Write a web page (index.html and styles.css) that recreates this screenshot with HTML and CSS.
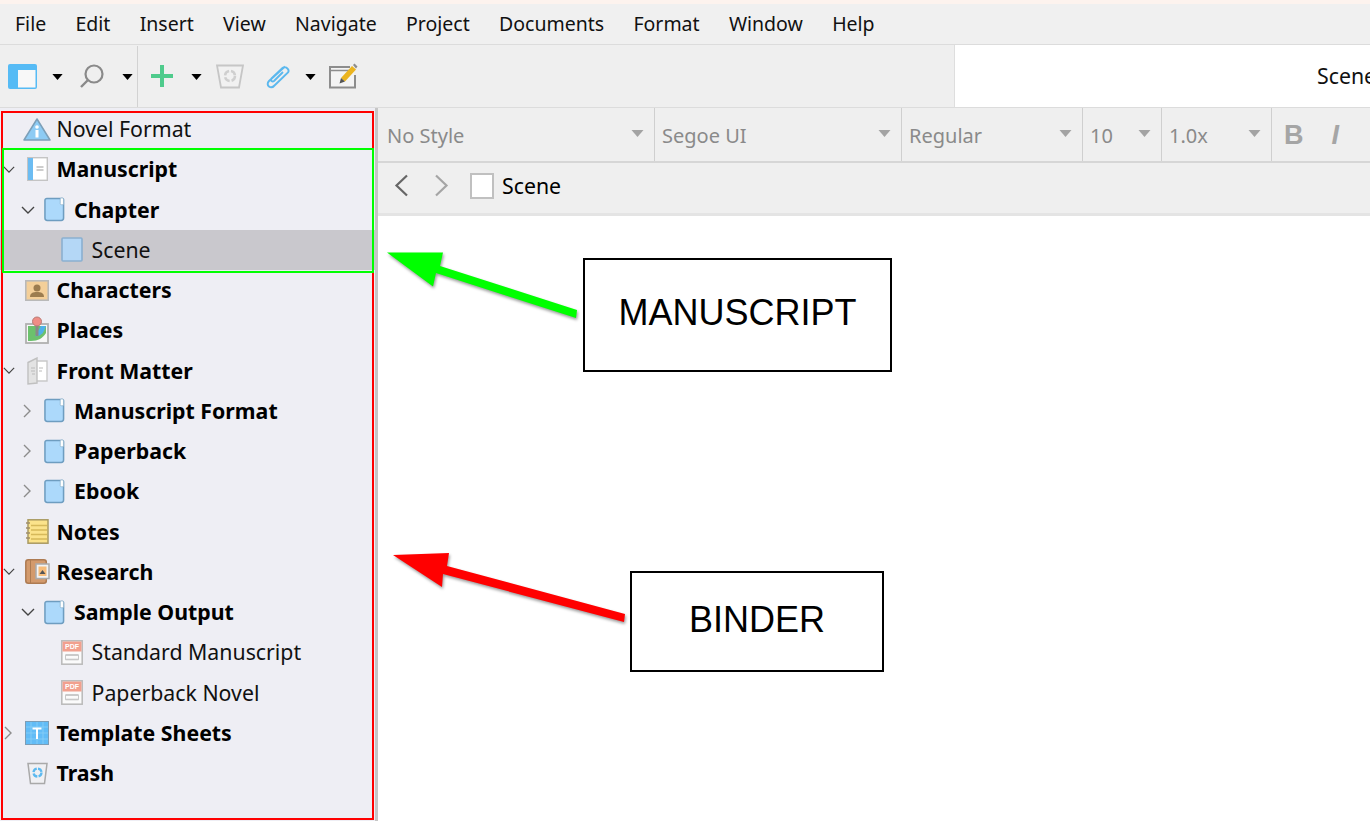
FILE: index.html
```html
<!DOCTYPE html>
<html lang="en">
<head>
<meta charset="utf-8">
<title>Scrivener binder</title>
<link rel="stylesheet" href="styles.css">
</head>
<body>
<svg class="defs" width="0" height="0" aria-hidden="true">
  <symbol id="folder" viewBox="0 0 22 26"><path d="M3 1.500h16.500a1 1 0 0 1 1 1V22a2.500 2.500 0 0 1-2.500 2.500H3.500A2.500 2.500 0 0 1 1 22V3.500a2 2 0 0 1 2-2z" fill="#acd9fb" stroke="#6e9dc0" stroke-width="1.600"/><rect x="17" y="1" width="3.400" height="7" rx="1" fill="#fff" stroke="#8fb3cc" stroke-width=".8"/></symbol>
  <symbol id="scene" viewBox="0 0 22 25"><rect x="1" y="1" width="20" height="23" rx="1" fill="#b4d7f6" stroke="#8bb0d0" stroke-width="1.600"/></symbol>
  <symbol id="pdf" viewBox="0 0 22 25"><rect x=".8" y=".8" width="20.400" height="23.400" fill="#fbfbfb" stroke="#b9b9b9" stroke-width="1.500"/><rect x="1.500" y="1.500" width="19" height="10" fill="#f2a08e"/><path d="M4.500 15h13M4.500 19.500h13" stroke="#bdbdbd" stroke-width="1.500"/><path d="M4.500 15h13v4.500h-13z" fill="none" stroke="#c8c8c8"/></symbol>
  <symbol id="caret" viewBox="0 0 12 7"><path d="M0 0h12L6 7z"/></symbol>
  <symbol id="down" viewBox="0 0 14 8"><path d="M1 1l6 6 6-6" fill="none" stroke="currentColor" stroke-width="1.400"/></symbol>
  <symbol id="right" viewBox="0 0 8 14"><path d="M1 1l6 6-6 6" fill="none" stroke="currentColor" stroke-width="1.400"/></symbol>
</svg>

<header class="menubar">
  <span>File</span><span>Edit</span><span>Insert</span><span>View</span><span>Navigate</span><span>Project</span><span>Documents</span><span>Format</span><span>Window</span><span>Help</span>
</header>

<div class="toolbar">
  <div class="tools">
    <svg class="t-layout" width="29" height="25" viewBox="0 0 29 25"><rect x="0" y="0" width="29" height="25" rx="2" fill="#56bbf5"/><rect x="10" y="6" width="17.500" height="17.500" fill="#f8f8f8"/></svg>
    <svg class="caret t-c1" width="11" height="6"><use href="#caret"/></svg>
    <svg class="t-search" width="24" height="24" viewBox="0 0 24 24"><circle cx="14" cy="10" r="8.500" fill="none" stroke="#8a8a8a" stroke-width="2.200"/><path d="M8 16l-7 7" stroke="#8a8a8a" stroke-width="2.400"/></svg>
    <svg class="caret t-c2" width="11" height="6"><use href="#caret"/></svg>
    <div class="t-sep"></div>
    <svg class="t-plus" width="22" height="22" viewBox="0 0 22 22"><path d="M11 0v22M0 11h22" stroke="#4fcb8c" stroke-width="4"/></svg>
    <svg class="caret t-c3" width="11" height="6"><use href="#caret"/></svg>
    <svg class="t-trash" width="28" height="25" viewBox="0 0 28 25"><path d="M1 1.500h26l-4 22H5z" fill="#f1f1f1" stroke="#c6c6c6" stroke-width="1.800"/><circle cx="14" cy="12" r="5" fill="none" stroke="#cfcfcf" stroke-width="2.500" stroke-dasharray="6 2"/></svg>
    <svg class="t-clip" width="25" height="26" viewBox="0 0 25 26"><path d="M20 3.500 4 18c-4 4.500 2 8.500 5.500 4.500L23 9.500c2-3-2.500-7-5.500-4.500L6.500 15.500c-1.500 2 .8 3.800 2.500 2.500l9-9" fill="none" stroke="#5bb8ee" stroke-width="1.900"/></svg>
    <svg class="caret t-c4" width="11" height="6"><use href="#caret"/></svg>
    <svg class="t-note" width="30" height="26" viewBox="0 0 30 26"><path d="M26 12v12.500H1V4h20" fill="#f4f4f4" stroke="#8d8d8d" stroke-width="2"/><path d="M1 7.500h19" stroke="#8d8d8d" stroke-width="1.500"/><path d="M12 15 23 3l4 3.500L16 18.500z" fill="#ebb41f"/><path d="M12 15l4 3.500-5.500 2z" fill="#555"/><path d="M24 2l1.500-1.500 3 3L27 5.500z" fill="#8d8d8d"/></svg>
  </div>
  <div class="doc-title">Scene</div>
</div>

<main class="workspace">
  <nav class="binder">
    <div class="row lv0"><i class="chev"></i><span class="ico"><svg width="28" height="23" viewBox="0 0 28 23"><path d="M14 1 27 22H1z" fill="#8dcbf4" stroke="#7c9fb8" stroke-width="1.500" stroke-linejoin="round"/><circle cx="14" cy="9" r="1.800" fill="#fff"/><rect x="12.500" y="12" width="3" height="7.500" fill="#fff"/></svg></span><span class="label">Novel Format</span></div>
    <div class="row lv0 b"><i class="chev"><svg class="down" width="12" height="7"><use href="#down"/></svg></i><span class="ico"><svg width="21" height="24" viewBox="0 0 21 24"><rect x=".7" y=".7" width="19.600" height="22.600" fill="#fff" stroke="#c4c4c4" stroke-width="1.400"/><rect x="1" y="1" width="5" height="22" fill="#6cbcf2"/><path d="M9.500 10h7M9.500 13h7" stroke="#bdbdbd" stroke-width="1.300"/></svg></span><span class="label">Manuscript</span></div>
    <div class="row lv1 b"><i class="chev"><svg class="down" width="14" height="8"><use href="#down"/></svg></i><span class="ico"><svg width="21" height="25"><use href="#folder"/></svg></span><span class="label">Chapter</span></div>
    <div class="row lv2 sel"><i class="chev"></i><span class="ico"><svg width="22" height="25"><use href="#scene"/></svg></span><span class="label">Scene</span></div>
    <div class="row lv0 b"><i class="chev"></i><span class="ico"><svg width="24" height="21" viewBox="0 0 24 21"><rect x=".8" y=".8" width="22.400" height="19.400" fill="#f4cf99" stroke="#b9b9b9" stroke-width="1.600"/><circle cx="12" cy="8" r="3.500" fill="#9c7c4f"/><path d="M5 17c0-4 3-5 7-5s7 1 7 5z" fill="#9c7c4f"/></svg></span><span class="label">Characters</span></div>
    <div class="row lv0 b"><i class="chev"></i><span class="ico"><svg width="24" height="28" viewBox="0 0 24 28"><rect x="1" y="8" width="22" height="19" fill="#f7f7f7" stroke="#b0b0b0" stroke-width="1.800"/><path d="M3 10h18v7c-3 5-8 8-15 8H3z" fill="#6cc16d"/><path d="M10 20c3 1 7-1 9-5l2-5h-5z" fill="#4fb1ea"/><path d="M12 9v11" stroke="#888" stroke-width="3"/><circle cx="12" cy="5.500" r="4.500" fill="#ef8d86" stroke="#b87a74"/></svg></span><span class="label">Places</span></div>
    <div class="row lv0 b"><i class="chev"><svg class="down" width="12" height="7"><use href="#down"/></svg></i><span class="ico"><svg width="21" height="28" viewBox="0 0 21 28"><path d="M9 4h11v20H9z" fill="#fff" stroke="#c9c9c9" stroke-width="1.400"/><path d="M1 5.500 10 1v25l-9 1z" fill="#e3e3e3" stroke="#c0c0c0" stroke-width="1.400"/><path d="M4 11h4M4 14h4M5 17h3M12 11h4M12 14h3" stroke="#bbb" stroke-width="1.100"/></svg></span><span class="label">Front Matter</span></div>
    <div class="row lv1 b"><i class="chev"><svg class="rt" width="8" height="14"><use href="#right"/></svg></i><span class="ico"><svg width="21" height="25"><use href="#folder"/></svg></span><span class="label">Manuscript Format</span></div>
    <div class="row lv1 b"><i class="chev"><svg class="rt" width="8" height="14"><use href="#right"/></svg></i><span class="ico"><svg width="21" height="25"><use href="#folder"/></svg></span><span class="label">Paperback</span></div>
    <div class="row lv1 b"><i class="chev"><svg class="rt" width="8" height="14"><use href="#right"/></svg></i><span class="ico"><svg width="21" height="25"><use href="#folder"/></svg></span><span class="label">Ebook</span></div>
    <div class="row lv0 b"><i class="chev"></i><span class="ico"><svg width="23" height="25" viewBox="0 0 23 25"><rect x="2" y=".8" width="20" height="23.400" fill="#fbe38b" stroke="#a99a62" stroke-width="1.500"/><path d="M5 6.500h16M5 11h16M5 15.500h16M5 20h16" stroke="#d6b95a" stroke-width="1.300"/><path d="M0 4h4M0 9h4M0 14h4M0 19h4" stroke="#a08f6a" stroke-width="1.600"/></svg></span><span class="label">Notes</span></div>
    <div class="row lv0 b"><i class="chev"><svg class="down" width="12" height="7"><use href="#down"/></svg></i><span class="ico"><svg width="25" height="25" viewBox="0 0 25 25"><rect x=".8" y=".8" width="20.500" height="23.400" rx="2.500" fill="#d39a6c" stroke="#ad7b52" stroke-width="1.500"/><path d="M5.500 1v23" stroke="#ad7b52"/><rect x="11" y="5" width="13" height="14.500" fill="#f3f3f3" stroke="#aaa" stroke-width="1.500"/><rect x="13.500" y="7.500" width="8" height="9.500" fill="#f7bd7b"/><path d="M14.500 15l3-4 3 4z" fill="#555"/></svg></span><span class="label">Research</span></div>
    <div class="row lv1 b"><i class="chev"><svg class="down" width="14" height="8"><use href="#down"/></svg></i><span class="ico"><svg width="21" height="25"><use href="#folder"/></svg></span><span class="label">Sample Output</span></div>
    <div class="row lv2"><i class="chev"></i><span class="ico"><svg width="22" height="25" viewBox="0 0 22 25"><use href="#pdf" width="22" height="25"/><text x="11" y="9.200" text-anchor="middle" class="pdf-label">PDF</text></svg></span><span class="label">Standard Manuscript</span></div>
    <div class="row lv2"><i class="chev"></i><span class="ico"><svg width="22" height="25" viewBox="0 0 22 25"><use href="#pdf" width="22" height="25"/><text x="11" y="9.200" text-anchor="middle" class="pdf-label">PDF</text></svg></span><span class="label">Paperback Novel</span></div>
    <div class="row lv0 b"><i class="chev"><svg class="rt tmpl" width="8" height="14"><use href="#right"/></svg></i><span class="ico"><svg width="24" height="24" viewBox="0 0 24 24"><rect x=".5" y=".5" width="23" height="23" fill="#62bcf6" stroke="#7d9db5"/><path d="M6 1v22M12 1v22M18 1v22M1 6h22M1 12h22M1 18h22" stroke="#8ccff8" stroke-width=".8"/><path d="M7.500 6.500h9v2h-3.500V18h-2V8.500H7.500z" fill="#fff"/></svg></span><span class="label">Template Sheets</span></div>
    <div class="row lv0 b"><i class="chev"></i><span class="ico"><svg width="21" height="23" viewBox="0 0 21 23"><path d="M1 1.500h19l-2.500 20h-14z" fill="#f0f0f3" stroke="#a9a9a9" stroke-width="1.500"/><circle cx="10.500" cy="10.500" r="4" fill="none" stroke="#5cb9f0" stroke-width="2.300" stroke-dasharray="5 1.300"/></svg></span><span class="label">Trash</span></div>
  </nav>

  <section class="editor">
    <div class="formatbar">
      <div class="fmt w-style"><span>No Style</span><svg class="caret" width="13" height="7"><use href="#caret"/></svg></div>
      <div class="fmt w-font"><span>Segoe UI</span><svg class="caret" width="13" height="7"><use href="#caret"/></svg></div>
      <div class="fmt w-weight"><span>Regular</span><svg class="caret" width="13" height="7"><use href="#caret"/></svg></div>
      <div class="fmt w-size"><span>10</span><svg class="caret" width="13" height="7"><use href="#caret"/></svg></div>
      <div class="fmt w-spacing"><span>1.0x</span><svg class="caret" width="13" height="7"><use href="#caret"/></svg></div>
      <div class="fmt-btns"><b>B</b><em>I</em></div>
    </div>
    <div class="navbar">
      <svg class="nav-back" width="15" height="23" viewBox="0 0 15 23"><path d="M13 1.500 2.500 11.500 13 21.500" fill="none" stroke="#666" stroke-width="2.200"/></svg>
      <svg class="nav-fwd" width="15" height="23" viewBox="0 0 15 23"><path d="M2 1.500 12.500 11.500 2 21.500" fill="none" stroke="#a5a5a5" stroke-width="2.200"/></svg>
      <span class="nav-doc"></span>
      <span class="nav-title">Scene</span>
    </div>
    <div class="page"></div>
  </section>
</main>

<div class="mark mark-red"></div>
<div class="mark mark-green"></div>
<svg class="arrows" width="1370" height="821" viewBox="0 0 1370 821" aria-hidden="true">
  <polygon class="arrow" fill="#00ff00" points="387,252.500 443,252.500 440,266 577,310 576,318 436,273 433,286.500"/>
  <polygon class="arrow" fill="#ff0000" points="393,555 449,553 447,566 625,614 624,622 443,574 442,587"/>
</svg>
<div class="callout callout-ms">MANUSCRIPT</div>
<div class="callout callout-bd">BINDER</div>
</body>
</html>
```
FILE: styles.css
```css
html, body { margin: 0; height: 821px; overflow: hidden; }
body {
  position: relative;
  display: flex;
  flex-direction: column;
  width: 1370px;
  background: #fff;
  font-family: "Noto Sans", "Open Sans", sans-serif;
  font-size: 20px;
  color: #111;
}
.defs { position: absolute; }
.pdf-label { font: bold 7px "Liberation Sans", sans-serif; fill: #fff; }

.menubar {
  box-sizing: border-box;
  height: 45px;
  flex: none;
  display: flex;
  align-items: center;
  gap: 29.300px;
  padding: 0 0 2px 15px;
  font-size: 19.500px;
  background: #f0f0f0;
  border-top: 4px solid #fdf3ee;
  border-bottom: 1px solid #dcdcdc;
}

.toolbar {
  height: 63px;
  flex: none;
  display: flex;
}
.tools {
  width: 955px;
  flex: none;
  display: flex;
  align-items: center;
  box-sizing: border-box;
  padding-left: 8px;
  background: #efefef;
  border-right: 1px solid #dedede;
  border-bottom: 1px solid #dcdcdc;
}
.caret { fill: #000; flex: none; }
.t-c1 { margin: 2px 0 0 15px; }
.t-search { margin-left: 17px; }
.t-c2 { margin: 2px 0 0 18px; }
.t-sep { width: 1px; height: 61px; background: #d2d2d2; margin-left: 4px; }
.t-plus { margin-left: 13px; }
.t-c3 { margin: 2px 0 0 18px; }
.t-trash { margin-left: 14px; }
.t-clip { margin-left: 21px; }
.t-c4 { margin: 2px 0 0 15px; }
.t-note { margin-left: 13px; }
.doc-title {
  flex: 1;
  min-width: 0;
  overflow: hidden;
  white-space: nowrap;
  box-sizing: border-box;
  padding: 16px 0 0 362px;
  font-size: 21.300px;
  background: #fff;
  border-bottom: 1px solid #dcdcdc;
}

.workspace { flex: 1; display: flex; min-height: 0; }
.binder {
  width: 378px;
  flex: none;
  box-sizing: border-box;
  padding-top: 1px;
  font-size: 21.300px;
  background: #eeeef4;
  border-right: 3px solid #c6c6c6;
}
.row {
  height: 40.250px;
  display: flex;
  align-items: center;
  white-space: nowrap;
}
.lv0 { padding-left: 3px; }
.lv1 { padding-left: 20.500px; }
.lv2 { padding-left: 38px; }
.chev {
  width: 22px;
  flex: none;
  display: flex;
  align-items: center;
  color: #444;
}
.chev .rt { margin-left: 2px; color: #8c8c8c; }
.chev .rt.tmpl { margin-left: 1px; }
.ico { width: 24px; flex: none; display: flex; justify-content: center; align-items: center; }
.ico svg { flex: none; display: block; }
.label { margin: 0 0 1px 7.500px; }
.b .label { font-weight: 700; color: #000; }
.sel { background: #c9c8cd; }

.editor { flex: 1; min-width: 0; display: flex; flex-direction: column; }
.formatbar {
  height: 55px;
  flex: none;
  display: flex;
  box-sizing: border-box;
  background: #efefef;
  border-bottom: 2px solid #d6d6d6;
  color: #8a8a8a;
}
.fmt {
  box-sizing: border-box;
  display: flex;
  align-items: center;
  justify-content: space-between;
  padding: 2px 10px 0 7px;
  border-right: 1px solid #cfcfcf;
  flex: none;
}
.fmt .caret { fill: #a3a3a3; margin-top: -4px; }
.w-style { width: 277px; padding-left: 9px; }
.w-font { width: 247px; }
.w-weight { width: 181px; }
.w-size { width: 79px; }
.w-spacing { width: 110px; }
.fmt-btns { display: flex; align-items: center; padding: 2px 0 0 12px; gap: 28px; font-size: 27px; color: #a5a5a5; }
.fmt-btns b { font-family: "Liberation Sans", sans-serif; }
.fmt-btns em { font-family: "Liberation Sans", sans-serif; font-weight: 700; }

.navbar {
  height: 53px;
  flex: none;
  box-sizing: border-box;
  display: flex;
  align-items: center;
  padding: 0 0 5px 16px;
  font-size: 21.300px;
  background: #efefef;
  border-bottom: 3px solid #e4e4e4;
}
.nav-fwd { margin-left: 25px; }
.nav-doc { width: 20px; height: 22px; margin-left: 21px; background: #fff; border: 2px solid #c0c0c0; }
.nav-title { margin-left: 8px; color: #000; }
.page { flex: 1; background: #fff; }

/* Annotation layer drawn on top of the screenshot */
.mark { position: absolute; box-sizing: border-box; pointer-events: none; }
.mark-red { left: 1px; top: 111px; width: 373px; height: 709px; border: 2px solid #ff0000; }
.mark-green { left: 2px; top: 148px; width: 372px; height: 125px; border: 2px solid #00ff00; }
.arrows { position: absolute; left: 0; top: 0; pointer-events: none; }
.arrow { filter: drop-shadow(1.500px 2px 1.500px rgba(0, 0, 0, .4)); }
.callout {
  position: absolute;
  box-sizing: border-box;
  display: flex;
  align-items: center;
  justify-content: center;
  background: #fff;
  border: 2px solid #000;
  font-family: "Liberation Sans", sans-serif;
  font-size: 36px;
  color: #000;
}
.callout-ms { left: 583px; top: 258px; width: 309px; height: 114px; padding-bottom: 5px; }
.callout-bd { left: 630px; top: 571px; width: 254px; height: 101px; padding-bottom: 3px; }
```
